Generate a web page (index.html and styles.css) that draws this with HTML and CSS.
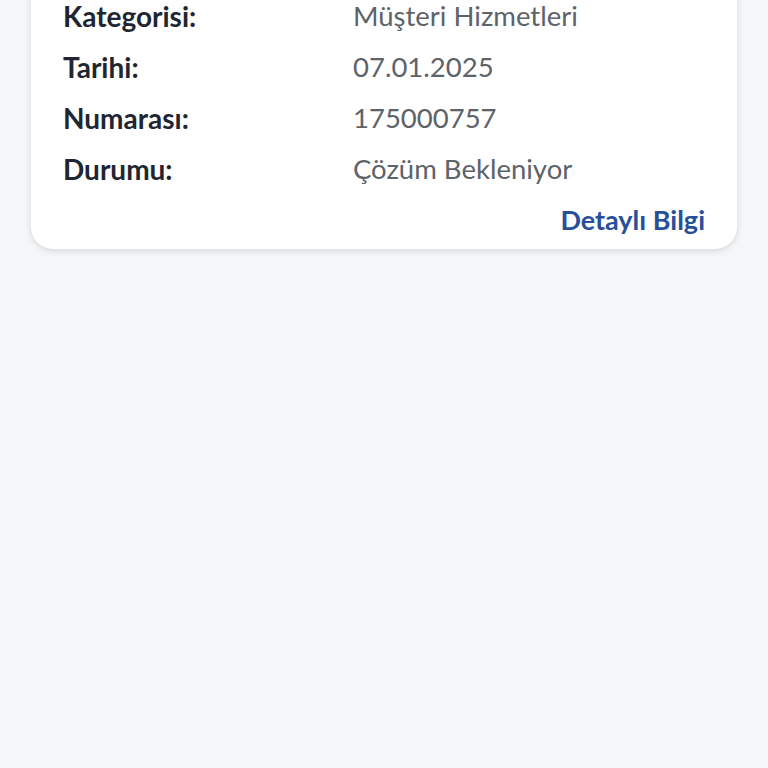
FILE: index.html
```
<html>

<head>
    <title>Talep</title>
    <link rel="stylesheet" href="styles.css">
</head>

<body>
    <main>
        <div class="card">
            <div class="row">
                <span class="label">Kategorisi:</span>
                <span class="value">Müşteri Hizmetleri</span>
            </div>
            <div class="row">
                <span class="label">Tarihi:</span>
                <span class="value">07.01.2025</span>
            </div>
            <div class="row">
                <span class="label">Numarası:</span>
                <span class="value">175000757</span>
            </div>
            <div class="row">
                <span class="label">Durumu:</span>
                <span class="value">Çözüm Bekleniyor</span>
            </div>
            <div class="actions">
                <a class="detail-link" href="#">Detaylı Bilgi</a>
            </div>
        </div>
    </main>
</body>

</html>
```

FILE: styles.css
```
html, body {
    margin: 0;
    height: 100%;
    background-color: #f5f6f8;
    font-family: "Lato", "Noto Sans", sans-serif;
}

main {
    padding: 0 31px;
}

.card {
    margin-top: -30px;
    padding: 20px 32px 5px 32px;
    background-color: #ffffff;
    border-radius: 22px;
    box-shadow: 0 2px 6px rgba(0, 0, 0, 0.12);
}

.row {
    display: flex;
    height: 51px;
    align-items: center;
}

.label {
    width: 290px;
    font-size: 28px;
    font-weight: 700;
    color: #1f2631;
}

.value {
    font-size: 27.5px;
    color: #5e6369;
}

.actions {
    display: flex;
    justify-content: flex-end;
    height: 50px;
    align-items: center;
}

.detail-link {
    font-size: 27px;
    font-weight: 700;
    color: #27509b;
    text-decoration: none;
}
```
